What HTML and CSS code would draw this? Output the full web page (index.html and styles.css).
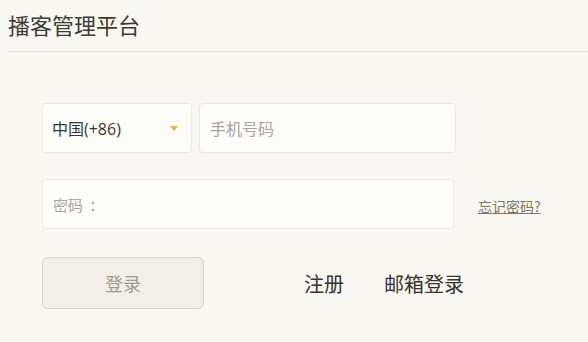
FILE: index.html
```html
<!DOCTYPE html>
<html lang="zh-CN">
<head>
<meta charset="utf-8">
<title>播客管理平台</title>
<link rel="stylesheet" href="styles.css">
</head>
<body>
<header class="header">
  <h1 class="title">播客管理平台</h1>
</header>
<main class="form">
  <div class="row row-phone">
    <div class="select">
      <span class="select-text">中国(+86)</span>
      <span class="caret"></span>
    </div>
    <div class="field field-phone"><span class="placeholder">手机号码</span></div>
  </div>
  <div class="row row-pass">
    <div class="field field-pass"><span class="placeholder small">密码<span class="colon">：</span></span></div>
    <a class="forgot" href="#">忘记密码?</a>
  </div>
  <div class="row row-actions">
    <button class="login" type="button">登录</button>
    <a class="link link-register" href="#">注册</a>
    <a class="link" href="#">邮箱登录</a>
  </div>
</main>
</body>
</html>
```

FILE: styles.css
```css
html, body {
  margin: 0;
  padding: 0;
  background: #f8f7f2;
  font-family: "Noto Sans CJK SC", "Noto Sans", sans-serif;
}

.header {
  margin-left: 8px;
  height: 52px;
  border-bottom: 1px solid #e4e1db;
  box-sizing: border-box;
  padding-top: 8px;
}

.title {
  margin: 0;
  font-size: 22px;
  line-height: 32px;
  font-weight: normal;
  color: #3f3a33;
}

.form {
  padding: 51px 0 0 42px;
}

.row {
  display: flex;
  align-items: center;
}

.select,
.field {
  box-sizing: border-box;
  height: 50px;
  background: #fefdf9;
  border: 1px solid #ebe8e1;
  border-radius: 4px;
  display: flex;
  align-items: center;
}

.select {
  width: 150px;
  padding: 0 11px 0 9px;
  justify-content: space-between;
}

.select-text {
  font-family: "Open Sans", "Noto Sans CJK SC", sans-serif;
  font-size: 16px;
  color: #3a352f;
}

.caret {
  width: 0;
  height: 0;
  border-left: 4px solid transparent;
  border-right: 4px solid transparent;
  border-top: 5px solid #eab43c;
  margin-right: 2px;
}

.field-phone {
  width: 257px;
  margin-left: 7px;
  padding-left: 10px;
}

.placeholder {
  font-size: 16px;
  color: #a9a49b;
}

.placeholder.small {
  font-size: 15px;
}

.colon {
  margin-left: 6px;
}

.row-pass {
  margin-top: 26px;
}

.field-pass {
  width: 412px;
  padding-left: 10px;
}

.forgot {
  margin-left: 24px;
  margin-top: 4px;
  font-size: 14px;
  color: #7d7567;
  text-decoration: underline;
}

.row-actions {
  margin-top: 28px;
}

.login {
  width: 162px;
  height: 52px;
  box-sizing: border-box;
  background: #f1efe8;
  border: 1px solid #d9d5cc;
  border-radius: 6px;
  font-family: "Noto Sans CJK SC", sans-serif;
  font-size: 18px;
  color: #a19b8f;
  padding: 0;
}

.link {
  font-size: 20px;
  color: #37332d;
  text-decoration: none;
}

.link-register {
  margin-left: 100px;
  margin-right: 40px;
}
```
